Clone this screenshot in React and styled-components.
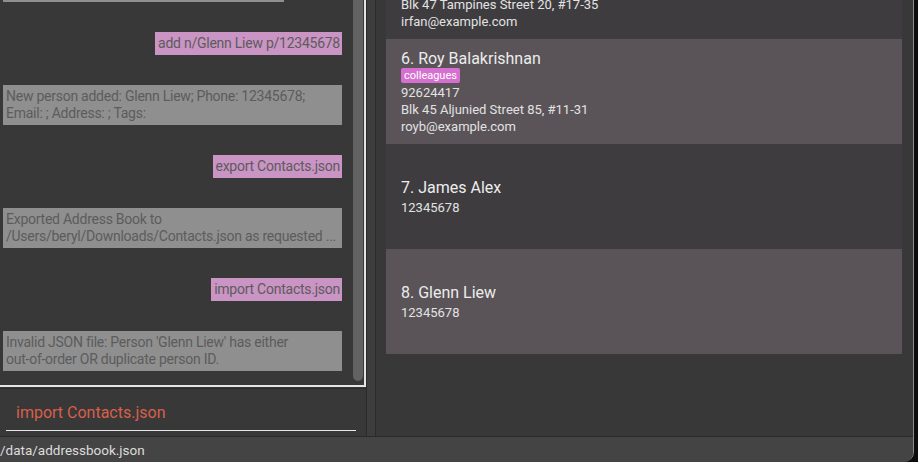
import React, { useLayoutEffect, useRef } from 'react';
import styled, { createGlobalStyle } from 'styled-components';

const GlobalStyle = createGlobalStyle`
  html, body {
    margin: 0;
    padding: 0;
    background: #0d0d0d;
  }
  body {
    font-family: Roboto, "Noto Sans", sans-serif;
  }
`;

const Screen = styled.div`
  width: 918px;
  height: 462px;
  background: #0d0d0d;
  overflow: hidden;
`;

const Window = styled.div`
  width: 913px;
  height: 462px;
  border-right: 1px solid #8a8a8a;
  border-bottom-right-radius: 10px;
  overflow: hidden;
  display: flex;
  flex-direction: column;
  background: #383838;
`;

const Main = styled.div`
  display: flex;
  height: 436px;
  border-bottom: 1px solid #2a2a2a;
`;

const LeftColumn = styled.div`
  width: 366px;
  display: flex;
  flex-direction: column;
`;

const ResultPanel = styled.div`
  height: 385px;
  display: flex;
  border-right: 2px solid #e4e4e4;
  border-bottom: 2px solid #e4e4e4;
`;

const MessageList = styled.div`
  width: 339px;
  padding: 0 0 14px 3px;
  display: flex;
  flex-direction: column;
  justify-content: flex-end;
  align-items: flex-end;
  gap: 30px;
  overflow: hidden;
`;

const Bubble = styled.div`
  flex-shrink: 0;
  box-sizing: border-box;
  max-width: 339px;
  padding: 3px 2px 3px 3px;
  font-size: 14px;
  line-height: 17px;
  letter-spacing: -0.25px;
  color: #5c5c5c;
  background: ${(p) => (p.$user ? '#ca94c4' : '#8f8f8f')};
  align-self: ${(p) => (p.$user ? 'flex-end' : 'flex-start')};
`;

const NoWrap = styled.span`
  white-space: nowrap;
`;

const ScrollTrack = styled.div`
  width: 10px;
  margin: 0 1px 0 11px;
  padding-bottom: 4px;
  display: flex;
`;

const Thumb = styled.div`
  flex: 1;
  background: #626262;
  border-radius: 0 0 5px 5px;
`;

const CommandBox = styled.div`
  margin-top: 1px;
  flex: 1;
  border-top: 1px solid #2b2b2b;
`;

const CommandField = styled.div`
  margin: 13px 10px 0 6px;
  padding: 0 0 6px 10px;
  border-bottom: 1px solid #e8e8e8;
  font-size: 16px;
  line-height: 22px;
  color: #d95f4b;
`;

const Divider = styled.div`
  width: 8px;
  background: #3d3d3d;
  border-left: 1px solid #2b2b2b;
  border-right: 1px solid #2b2b2b;
`;

const PersonList = styled.div`
  position: relative;
  flex: 1;
  overflow: hidden;
  padding: 0 11px 120px 10px;
`;

const Card = styled.div`
  min-height: 105px;
  box-sizing: border-box;
  padding: 0 15px;
  display: flex;
  flex-direction: column;
  justify-content: center;
  align-items: flex-start;
  background: ${(p) => (p.$light ? '#5a5459' : '#3e3c3f')};
`;

const Name = styled.div`
  font-size: 16px;
  line-height: 20px;
  color: #ececec;
`;

const Tags = styled.div`
  display: flex;
  gap: 4px;
  margin-top: -1px;
`;

const Tag = styled.span`
  height: 15px;
  padding: 0 3px;
  border-radius: 2px;
  font-size: 11px;
  line-height: 15px;
  color: #ffffff;
  background: #d570d1;
`;

const Detail = styled.div`
  padding-top: 1px;
  margin-bottom: -1px;
  font-size: 13px;
  line-height: 17px;
  color: #e2e2e2;
`;

const StatusBar = styled.div`
  height: 25px;
  box-sizing: border-box;
  padding-top: 1px;
  background: #444444;
  font-size: 13.5px;
  line-height: 24px;
  color: #dcdcdc;
`;

const messages = [
  { user: false, text: 'Deleted Person: Bernice Yu; Phone: 99272758;' },
  { user: true, text: 'add n/Glenn Liew p/12345678' },
  { user: false, text: 'New person added: Glenn Liew; Phone: 12345678; Email: ; Address: ; Tags:' },
  { user: true, text: 'export Contacts.json' },
  { user: false, text: 'Exported Address Book to /Users/beryl/Downloads/Contacts.json as requested ...' },
  { user: true, text: 'import Contacts.json' },
  {
    user: false,
    text: (
      <>
        Invalid JSON file: Person 'Glenn Liew' has either <NoWrap>out-of-order</NoWrap> OR duplicate
        person ID.
      </>
    ),
  },
];

const persons = [
  { name: 'Alex Yeoh', tags: ['friends'], phone: '87438807', address: 'Blk 30 Geylang Street 29, #06-40', email: 'alexyeoh@example.com' },
  { name: 'Bernice Yu', tags: ['colleagues', 'friends'], phone: '99272758', address: 'Blk 30 Lorong 3 Serangoon Gardens, #07-18', email: 'berniceyu@example.com' },
  { name: 'Charlotte Oliveiro', tags: ['neighbours'], phone: '93210283', address: 'Blk 11 Ang Mo Kio Street 74, #11-04', email: 'charlotte@example.com' },
  { name: 'David Li', tags: ['family'], phone: '91031282', address: 'Blk 436 Serangoon Gardens Street 26, #16-43', email: 'lidavid@example.com' },
  { name: 'Irfan Ibrahim', tags: ['classmates'], phone: '92492021', address: 'Blk 47 Tampines Street 20, #17-35', email: 'irfan@example.com' },
  { name: 'Roy Balakrishnan', tags: ['colleagues'], phone: '92624417', address: 'Blk 45 Aljunied Street 85, #11-31', email: 'royb@example.com' },
  { name: 'James Alex', tags: [], phone: '12345678' },
  { name: 'Glenn Liew', tags: [], phone: '12345678' },
];

const PersonCard = ({ index, person }) => (
  <Card $light={index % 2 === 0}>
    <Name>
      {index}. {person.name}
    </Name>
    {person.tags.length > 0 && (
      <Tags>
        {person.tags.map((t) => (
          <Tag key={t}>{t}</Tag>
        ))}
      </Tags>
    )}
    <Detail>{person.phone}</Detail>
    {person.address && <Detail>{person.address}</Detail>}
    {person.email && <Detail>{person.email}</Detail>}
  </Card>
);

const App = () => {
  const listRef = useRef(null);

  // list is scrolled so that card 5 is mostly above the view
  useLayoutEffect(() => {
    const list = listRef.current;
    if (list) list.scrollTop = list.children[4].offsetTop + 66;
  }, []);

  return (
    <Screen>
      <GlobalStyle />
      <Window>
        <Main>
          <LeftColumn>
            <ResultPanel>
              <MessageList>
                {messages.map((m, i) => (
                  <Bubble key={i} $user={m.user}>
                    {m.text}
                  </Bubble>
                ))}
              </MessageList>
              <ScrollTrack>
                <Thumb />
              </ScrollTrack>
            </ResultPanel>
            <CommandBox>
              <CommandField>import Contacts.json</CommandField>
            </CommandBox>
          </LeftColumn>
          <Divider />
          <PersonList ref={listRef}>
            {persons.map((p, i) => (
              <PersonCard key={p.name} index={i + 1} person={p} />
            ))}
          </PersonList>
        </Main>
        <StatusBar>/data/addressbook.json</StatusBar>
      </Window>
    </Screen>
  );
};

export default App;
